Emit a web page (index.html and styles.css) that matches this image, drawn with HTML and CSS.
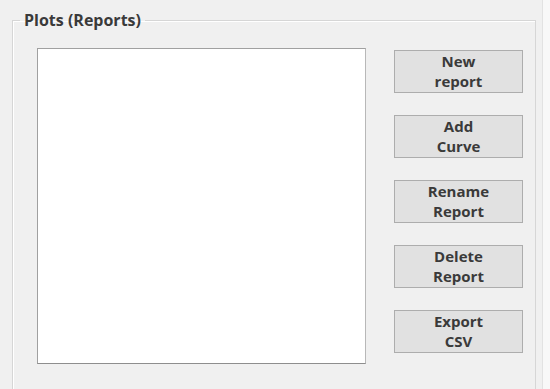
FILE: index.html
```html
<!DOCTYPE html>
<html lang="en">
<head>
  <meta charset="UTF-8" />
  <title>Plots (Reports)</title>
  <link rel="stylesheet" href="styles.css">
</head>
<body>
  <div class="window">
    <fieldset class="group">
      <legend>Plots (Reports)</legend>
      <div class="group-body">
        <div class="report-list"></div>
        <div class="actions">
          <button>New<br>report</button>
          <button>Add<br>Curve</button>
          <button>Rename<br>Report</button>
          <button>Delete<br>Report</button>
          <button>Export<br>CSV</button>
        </div>
      </div>
    </fieldset>
  </div>
</body>
</html>
```

FILE: styles.css
```css
body {
  margin: 0;
  background: #f8f8f8;
  font-family: 'Open Sans', 'DejaVu Sans', sans-serif;
  color: #333;
}

.window {
  width: 543px;
  height: 389px;
  box-sizing: border-box;
  padding: 10px 0 0 12px;
  background: #f0f0f0;
  border-right: 1px solid #e2e2e2;
  overflow: hidden;
}

.group {
  box-sizing: border-box;
  width: 524px;
  height: 379px;
  margin: 0;
  padding: 18px 12px 0 24px;
  border: 1px solid #d6d6d6;
  border-bottom: none;
  box-shadow: inset 1px 1px 0 #fff;
}

.group legend {
  margin-left: -17px;
  padding: 0 4px;
  font-size: 16px;
  font-weight: bold;
  line-height: 20px;
  color: #3a3a3a;
}

.group-body {
  display: flex;
  gap: 28px;
}

.report-list {
  width: 327px;
  height: 314px;
  background: #fff;
  border: 1px solid #a0a0a0;
  border-right-color: #b8b8b8;
  border-bottom-color: #8e8e8e;
}

.actions {
  display: flex;
  flex-direction: column;
  gap: 22px;
  margin-top: 2px;
}

.actions button {
  width: 129px;
  height: 43px;
  padding: 0 0 1px;
  background: #e1e1e1;
  border: 1px solid #adadad;
  font-family: inherit;
  font-size: 15px;
  font-weight: bold;
  line-height: 20px;
  color: #3a3a3a;
}
```
